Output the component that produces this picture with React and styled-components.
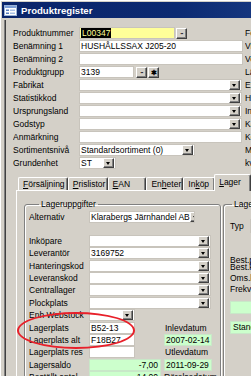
import React from 'react';
import styled, { createGlobalStyle } from 'styled-components';

const GlobalStyle = createGlobalStyle`
  html, body {
    margin: 0;
    padding: 0;
    background: #d4d0c8;
    overflow: hidden;
  }
  body {
    font-family: "Liberation Sans", Arial, sans-serif;
    font-size: 8.5px;
    color: #000;
  }
`;

const Window = styled.div`
  position: relative;
  width: 251px;
  height: 376px;
  overflow: hidden;
  background: #d4d0c8;
  box-shadow: inset 1px 1px 0 #fff;
  padding: 2px 0 0 2px;
  box-sizing: border-box;
`;

const TitleBar = styled.div`
  height: 16px;
  display: flex;
  align-items: center;
  gap: 4px;
  padding-left: 2px;
  background: linear-gradient(90deg, #0a246a 0%, #0c2a72 70%, #16367e 100%);
  color: #fff;
  font-weight: bold;
  font-size: 9.6px;
`;

const Client = styled.div`
  margin: 2px 0 0 2px;
  border-left: 1px solid #808080;
  box-shadow: inset 1px 0 0 #404040;
  padding: 7px 0 0 8px;
  height: 400px;
`;

const UpperForm = styled.div`
  display: flex;
  flex-direction: column;
  gap: 1px;
`;

const Row = styled.div`
  display: flex;
  align-items: center;
  height: ${p => p.$h || 12}px;
`;

const Label = styled.div`
  width: ${p => p.$w || 66}px;
  flex-shrink: 0;
  white-space: nowrap;
  overflow: hidden;
`;

const Field = styled.div`
  position: relative;
  width: ${p => p.$w}px;
  height: 12px;
  box-sizing: border-box;
  flex-shrink: 0;
  background: ${p => (p.$bg === 'yellow' ? '#ffff99' : p.$bg === 'green' ? '#ccffcc' : '#fff')};
  border: 1px solid ${p => (p.$bg === 'green' ? '#c8e8c8' : '#c8c4bc')};
  padding: 0 ${p => (p.$right ? 2 : 1)}px 0 1px;
  line-height: 10px;
  white-space: nowrap;
  overflow: hidden;
  text-align: ${p => (p.$right ? 'right' : 'left')};
  display: flex;
  align-items: center;
  justify-content: ${p => (p.$right ? 'flex-end' : 'flex-start')};
`;

const Selected = styled.span`
  background: #000;
  color: #ffff99;
  padding: 0 1px;
  line-height: 10px;
`;

const DropButton = styled.div`
  margin-left: auto;
  width: 11px;
  height: 10px;
  box-sizing: border-box;
  flex-shrink: 0;
  background: #d4d0c8;
  border-top: 1px solid #fff;
  border-left: 1px solid #fff;
  border-right: 1px solid #404040;
  border-bottom: 1px solid #404040;
  box-shadow: inset -1px -1px 0 #808080;
  display: flex;
  align-items: center;
  justify-content: center;
  &::after {
    content: '';
    border-left: 2.5px solid transparent;
    border-right: 2.5px solid transparent;
    border-top: 3px solid #000;
    margin: 1px 1px 0 0;
  }
`;

const SmallButton = styled.div`
  width: 11px;
  height: 11px;
  box-sizing: border-box;
  margin-left: ${p => p.$ml || 1}px;
  background: #d4d0c8;
  border-top: 1px solid #fff;
  border-left: 1px solid #fff;
  border-right: 1px solid #404040;
  border-bottom: 1px solid #404040;
  box-shadow: inset -1px -1px 0 #808080;
  display: flex;
  align-items: center;
  justify-content: center;
  font-size: 7px;
  font-weight: bold;
  line-height: 7px;
  letter-spacing: -1px;
`;

const SideLetter = styled.div`
  margin-left: auto;
  width: 6px;
  overflow: hidden;
  white-space: nowrap;
`;

const Tabs = styled.div`
  margin: 5px 0 0 3px;
`;

const TabStrip = styled.div`
  display: flex;
  align-items: flex-end;
  height: 16px;
  padding-left: 2px;
  position: relative;
  z-index: 1;
`;

const Tab = styled.div`
  width: ${p => p.$w}px;
  height: ${p => (p.$active ? 17 : 13)}px;
  box-sizing: border-box;
  padding: ${p => (p.$active ? '2px 0 0 4px' : '1px 0 0 4px')};
  margin-left: ${p => (p.$active ? -1 : 0)}px;
  margin-bottom: ${p => (p.$active ? -1 : 0)}px;
  border-top: 1px solid #fff;
  border-left: 1px solid #fff;
  border-right: 1px solid #404040;
  box-shadow: inset -1px 0 0 #808080;
  border-radius: 2px 2px 0 0;
  background: #d4d0c8;
  white-space: nowrap;
  line-height: 10px;
  u { text-decoration: underline; }
`;

const Panel = styled.div`
  border-top: 1px solid #fff;
  border-left: 1px solid #fff;
  padding: 8px 0 0 7px;
  display: flex;
  gap: 2px;
  height: 300px;
`;

const Group = styled.fieldset`
  margin: 0;
  width: ${p => p.$w}px;
  flex-shrink: 0;
  box-sizing: border-box;
  border: 1px solid #808080;
  border-radius: 3px;
  box-shadow: inset 1px 1px 0 #fff, 1px 1px 0 #fff;
  padding: 2px 0 0 4px;
  min-width: 0;
  height: 260px;
`;

const Legend = styled.legend`
  padding: 0 2px;
  margin-left: 10px;
  line-height: 10px;
  white-space: nowrap;
`;

const GroupRows = styled.div`
  display: flex;
  flex-direction: column;
  gap: 0.4px;
`;

const Spacer = styled.div`
  height: ${p => p.$h}px;
`;

const ColLabel = styled.div`
  margin-left: ${p => p.$ml || 0}px;
  white-space: nowrap;
`;

const Ellipse = styled.div`
  position: absolute;
  left: 17px;
  top: 312px;
  width: 118px;
  height: 37px;
  box-sizing: border-box;
  border: 2px solid #e8202a;
  border-radius: 50%;
  pointer-events: none;
`;

const StatusGroup = styled.fieldset`
  margin: 0;
  flex: 1;
  border: 1px solid #808080;
  border-right: none;
  border-radius: 3px 0 0 3px;
  box-shadow: inset 1px 1px 0 #fff;
  padding: 10px 0 0 6px;
  min-width: 0;
  height: 260px;
`;

const StatusText = styled.div`
  white-space: nowrap;
  line-height: ${p => p.$lh || 7}px;
  margin-top: ${p => p.$mt || 0}px;
`;

const GreenBox = styled.div`
  height: 11px;
  margin-top: ${p => p.$mt || 0}px;
  background: #ccffcc;
  border: 1px solid #c8e8c8;
  border-right: none;
  padding-left: 2px;
  line-height: 10px;
  white-space: nowrap;
`;

const TypRow = styled.div`
  display: flex;
  align-items: center;
  gap: 6px;
  white-space: nowrap;
`;

const TypField = styled.div`
  width: 20px;
  height: 12px;
  background: #fff;
  border: 1px solid #c8c4bc;
  border-right: none;
`;

function FormIcon() {
  return (
    <svg width="13" height="11" viewBox="0 0 13 11">
      <rect x="0.5" y="0.5" width="12" height="10" fill="#fff" stroke="#9cb4d8" />
      <rect x="1" y="1" width="11" height="2" fill="#7d9ed6" />
      <rect x="2" y="4.5" width="3" height="1.5" fill="#5a7ec0" />
      <rect x="6" y="4.5" width="5" height="1.5" fill="#a8bfe6" />
      <rect x="2" y="7.5" width="3" height="1.5" fill="#5a7ec0" />
      <rect x="6" y="7.5" width="5" height="1.5" fill="#a8bfe6" />
    </svg>
  );
}

function Combo({ w, children, bg }) {
  return (
    <Field $w={w} $bg={bg}>
      {children}
      <DropButton />
    </Field>
  );
}

const upperCombos = [
  ['Fabrikat', 'Ext.tillverkare'],
  ['Statistikkod', 'Höjd'],
  ['Ursprungsland', 'Inpris'],
  ['Godstyp', 'Kalkylpris'],
];

const lowerCombos = [
  ['Inköpare', ''],
  ['Leverantör', '3169752'],
  ['Hanteringskod', ''],
  ['Leveranskod', ''],
  ['Centrallager', ''],
  ['Plockplats', ''],
];

export default function App() {
  return (
    <>
      <GlobalStyle />
      <Window>
        <TitleBar>
          <FormIcon />
          <span>Produktregister</span>
        </TitleBar>
        <Client>
          <UpperForm>
            <Row>
              <Label>Produktnummer</Label>
              <Field $w={96} $bg="yellow"><Selected>L00347</Selected></Field>
              <SmallButton>··</SmallButton>
              <SideLetter>Förpackning</SideLetter>
            </Row>
            <Row>
              <Label>Benämning 1</Label>
              <Field $w={164}>HUSHÅLLSSAX J205-20</Field>
              <SideLetter>Vikt</SideLetter>
            </Row>
            <Row>
              <Label>Benämning 2</Label>
              <Field $w={164} />
              <SideLetter>Volym</SideLetter>
            </Row>
            <Row>
              <Label>Produktgrupp</Label>
              <Field $w={55}>3139</Field>
              <SmallButton $ml={2}>··</SmallButton>
              <SmallButton $ml={0}>✱</SmallButton>
              <SideLetter>Längd</SideLetter>
            </Row>
            {upperCombos.map(([l, s]) => (
              <Row key={l}>
                <Label>{l}</Label>
                <Combo w={163} />
                <SideLetter>{s}</SideLetter>
              </Row>
            ))}
            <Row>
              <Label>Anmärkning</Label>
              <Field $w={163} />
              <SideLetter>Kostpris</SideLetter>
            </Row>
            <Row>
              <Label>Sortimentsnivå</Label>
              <Combo w={116}>Standardsortiment (0)</Combo>
              <SideLetter>Marginal</SideLetter>
            </Row>
            <Row>
              <Label>Grundenhet</Label>
              <Combo w={37}>ST</Combo>
              <SideLetter>kvant</SideLetter>
            </Row>
          </UpperForm>

          <Tabs>
            <TabStrip>
              <Tab $w={50}><u>F</u>örsäljning</Tab>
              <Tab $w={40}><u>P</u>rislistor</Tab>
              <Tab $w={39}><u>E</u>AN</Tab>
              <Tab $w={37}>En<u>h</u>eter</Tab>
              <Tab $w={32}>In<u>k</u>öp</Tab>
              <Tab $w={37} $active><u>L</u>ager</Tab>
            </TabStrip>
            <Panel>
              <Group $w={197}>
                <Legend>Lageruppgifter</Legend>
                <GroupRows>
                  <Row>
                    <Label $w={60}>Alternativ</Label>
                    <Combo w={106}>Klarabergs Järnhandel AB</Combo>
                  </Row>
                  <Spacer $h={11} />
                  {lowerCombos.map(([l, v]) => (
                    <Row key={l}>
                      <Label $w={60}>{l}</Label>
                      <Combo w={122}>{v}</Combo>
                    </Row>
                  ))}
                  <Row>
                    <Label $w={60}>Enh Webstock</Label>
                    <Combo w={46} />
                  </Row>
                  <Row>
                    <Label $w={60}>Lagerplats</Label>
                    <Field $w={46}>B52-13</Field>
                    <ColLabel $ml={30}>Inlevdatum</ColLabel>
                  </Row>
                  <Row>
                    <Label $w={60}>Lagerplats alt</Label>
                    <Field $w={46}>F18B27</Field>
                    <Field $w={48} $bg="green" style={{ marginLeft: 29 }}>2007-02-14</Field>
                  </Row>
                  <Row>
                    <Label $w={60}>Lagerplats res</Label>
                    <Field $w={46} />
                    <ColLabel $ml={30}>Utlevdatum</ColLabel>
                  </Row>
                  <Row>
                    <Label $w={60}>Lagersaldo</Label>
                    <Field $w={72} $bg="green" $right>-7,00</Field>
                    <Field $w={48} $bg="green" style={{ marginLeft: 3 }}>2011-09-29</Field>
                  </Row>
                  <Row>
                    <Label $w={60}>Beställt antal</Label>
                    <Field $w={72} $bg="green" $right>14,00</Field>
                    <ColLabel $ml={3}>Rörelsedatum</ColLabel>
                  </Row>
                </GroupRows>
              </Group>
              <StatusGroup>
                <Legend style={{ marginLeft: 2 }}>Lagerstatus</Legend>
                <TypRow>Typ<TypField /></TypRow>
                <StatusText $mt={24}>Best.punkt</StatusText>
                <StatusText>Best.kvant</StatusText>
                <StatusText $mt={4}>Oms.kod</StatusText>
                <StatusText $mt={3} $lh={8}>Frekv.</StatusText>
                <GreenBox $mt={8} />
                <GreenBox $mt={7}>Standard</GreenBox>
              </StatusGroup>
            </Panel>
          </Tabs>
        </Client>
        <Ellipse />
      </Window>
    </>
  );
}
